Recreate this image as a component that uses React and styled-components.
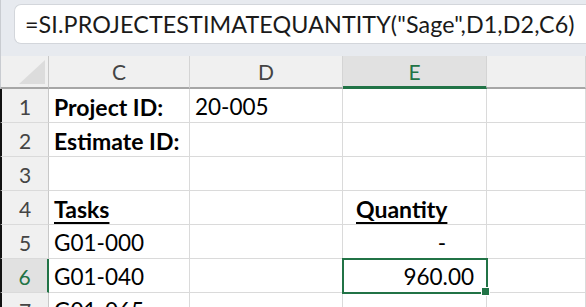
import React from "react";
import styled, { createGlobalStyle, css } from "styled-components";

const GREEN = "#217346";
const GRID = "#dadada";

const GlobalStyle = createGlobalStyle`
  html, body {
    margin: 0;
    padding: 0;
    background: #ffffff;
  }
`;

const Page = styled.div`
  width: 586px;
  height: 307px;
  overflow: hidden;
  font-family: Lato, "Noto Sans", "Liberation Sans", sans-serif;
`;

const FormulaBar = styled.div`
  background: #e7eaef;
  padding: 4px 0 12px 13px;
  border-left: 1px solid #c9ccd1;
`;

const FormulaBox = styled.div`
  height: 38px;
  display: flex;
  align-items: center;
  padding-left: 10px;
  background: #ffffff;
  border: 1px solid #d3d6db;
  border-right: none;
  border-radius: 7px 0 0 7px;
  font-size: 23.3px;
  letter-spacing: 0.1px;
  color: #1a1a1a;
  white-space: nowrap;
`;

const Sheet = styled.div`
  display: grid;
  grid-template-columns: 49px 141px 153px 144px 1fr;
  grid-auto-rows: 34px;
  grid-template-rows: 33px;
`;

const Corner = styled.div`
  background: #f0f0f0;
  border-left: 1px solid #c9ccd1;
  border-right: 1px solid #c8c8c8;
  border-bottom: 2px solid #a6a6a6;
  display: flex;
  align-items: flex-end;
  justify-content: flex-end;
  padding: 0 3px 3px 0;
`;

const ColHeader = styled.div`
  background: ${(p) => (p.$active ? "#e1e1e1" : "#f0f0f0")};
  border-right: 1px solid #d4d4d4;
  border-bottom: ${(p) => (p.$active ? `3px solid ${GREEN}` : "2px solid #a6a6a6")};
  display: flex;
  align-items: center;
  justify-content: center;
  font-size: 21px;
  color: ${(p) => (p.$active ? GREEN : "#444")};
`;

const RowHeader = styled.div`
  background: ${(p) => (p.$active ? "#e1e1e1" : "#f0f0f0")};
  border-left: 2px solid #111;
  border-bottom: 1px solid ${GRID};
  border-right: ${(p) => (p.$active ? `2px solid ${GREEN}` : "1px solid #c8c8c8")};
  display: flex;
  align-items: center;
  justify-content: center;
  padding-top: 2px;
  font-size: 21px;
  color: ${(p) => (p.$active ? GREEN : "#444")};
`;

const Cell = styled.div`
  position: relative;
  border-right: 1px solid ${GRID};
  border-bottom: 1px solid ${GRID};
  display: flex;
  align-items: center;
  padding: 2px ${(p) => p.$padRight ?? 5}px 0 ${(p) => p.$padLeft ?? 5}px;
  justify-content: ${(p) => (p.$right ? "flex-end" : "flex-start")};
  font-size: ${(p) => (p.$bold ? 23 : 22.5)}px;
  color: #000;
  white-space: nowrap;
  font-weight: ${(p) => (p.$bold ? 700 : 400)};
  ${(p) =>
    p.$underline &&
    css`
      text-decoration: underline;
      text-decoration-thickness: 2px;
      text-underline-offset: 4px;
    `}
  ${(p) =>
    p.$selected &&
    css`
      outline: 2px solid ${GREEN};
      outline-offset: -1px;
      z-index: 1;
    `}
`;

const FillHandle = styled.span`
  position: absolute;
  right: -4px;
  bottom: -4px;
  width: 7px;
  height: 7px;
  background: ${GREEN};
  border: 1px solid #fff;
`;

const rows = [
  { n: 1, c: { text: "Project ID:", bold: true }, d: { text: "20-005" } },
  { n: 2, c: { text: "Estimate ID:", bold: true } },
  { n: 3 },
  {
    n: 4,
    c: { text: "Tasks", bold: true, underline: true },
    e: { text: "Quantity", bold: true, underline: true, padLeft: 13 },
  },
  { n: 5, c: { text: "G01-000" }, e: { text: "-", right: true, padRight: 40 } },
  { n: 6, c: { text: "G01-040" }, e: { text: "960.00", right: true, padRight: 12, selected: true } },
  { n: 7, c: { text: "G01-065" } },
];

function DataCell({ data }) {
  if (!data) return <Cell />;
  return (
    <Cell
      $bold={data.bold}
      $underline={data.underline}
      $right={data.right}
      $padLeft={data.padLeft}
      $padRight={data.padRight}
      $selected={data.selected}
    >
      {data.text}
      {data.selected && <FillHandle />}
    </Cell>
  );
}

export default function App() {
  return (
    <Page>
      <GlobalStyle />
      <FormulaBar>
        <FormulaBox>=SI.PROJECTESTIMATEQUANTITY("Sage",D1,D2,C6)</FormulaBox>
      </FormulaBar>
      <Sheet>
        <Corner>
          <svg width="26" height="24" viewBox="0 0 26 24">
            <polygon points="26,0 26,24 0,24" fill="#dcdcdc" />
          </svg>
        </Corner>
        <ColHeader>C</ColHeader>
        <ColHeader>D</ColHeader>
        <ColHeader $active>E</ColHeader>
        <ColHeader />
        {rows.map((r) => (
          <React.Fragment key={r.n}>
            <RowHeader $active={r.n === 6}>{r.n}</RowHeader>
            <DataCell data={r.c} />
            <DataCell data={r.d} />
            <DataCell data={r.e} />
            <Cell />
          </React.Fragment>
        ))}
      </Sheet>
    </Page>
  );
}
